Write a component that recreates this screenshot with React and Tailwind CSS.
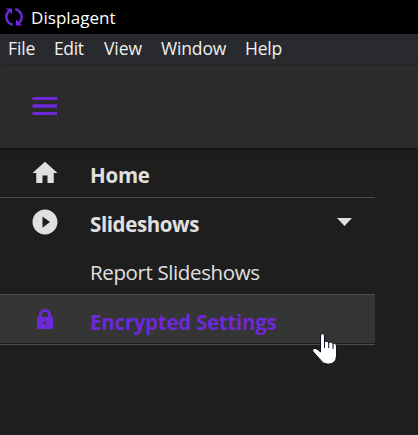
const font = "font-['Open_Sans','Noto_Sans',sans-serif]";

function SyncLogo() {
  return (
    <svg className="block h-5 w-5" viewBox="0 0 20 20" fill="none" stroke="#6d28d9" strokeWidth="2.4">
      <path d="M8.800 17.700A7.900 7.900 0 0 1 5 4" />
      <path d="M11.200 2.300A7.900 7.900 0 0 1 15 16" />
      <path d="M1.800 1.500H8V7.500Z" fill="#6d28d9" stroke="none" />
      <path d="M18.200 18.500H12V12.500Z" fill="#6d28d9" stroke="none" />
    </svg>
  );
}

function MaterialIcon({ d, className }) {
  return (
    <svg className={`block shrink-0 ${className}`} viewBox="0 0 24 24" fill="currentColor">
      <path d={d} />
    </svg>
  );
}

const icons = {
  home: "M10 20v-6h4v6h5v-8h3L12 3 2 12h3v8z",
  play: "M12 2C6.480 2 2 6.480 2 12s4.480 10 10 10 10-4.480 10-10S17.520 2 12 2zm-2 14.500v-9l6 4.500-6 4.500z",
};

export default function App() {
  return (
    <div className={`relative h-[435px] w-[418px] overflow-hidden bg-[#1e1e1e] text-[#e0e0e0] ${font}`}>
      <div className="flex h-[34px] items-center bg-black pl-1 text-white">
        <SyncLogo />
        <span className="mt-px ml-[7px] text-[17px] leading-6 tracking-[0.05px]">Displagent</span>
      </div>
      <div className="flex h-[32px] items-start bg-[#292a2d] pt-[2px] pl-2 text-[17.5px] leading-6 text-[#f0f0f0]">
        <span className="w-[46px] tracking-[-0.1px]">File</span>
        <span className="w-[50px] tracking-[-0.4px]">Edit</span>
        <span className="w-[57px] tracking-[-0.1px]">View</span>
        <span className="w-[84px] tracking-[-0.15px]">Window</span>
        <span className="tracking-[-0.2px]">Help</span>
      </div>
      <header className="relative flex h-[82px] items-start bg-[#2b2b2b] pt-[31px] pl-8 text-[#6d28d9] shadow-[0_1px_4px_rgba(0,0,0,0.5)]">
        <svg className="block h-[18px] w-[25px]" viewBox="0 0 25 18" fill="currentColor">
          <path d="M0.500 0H25V3H0.500ZM0.500 7.200H25V10.700H0.500ZM0.500 15H25V18H0.500Z" />
        </svg>
      </header>
      <nav className="w-[375px] text-[20.5px] leading-7">
        <div className="flex h-[50px] items-center border-b border-[#4c4c4c] pl-[30px] font-bold">
          <MaterialIcon d={icons.home} className="mt-px h-[30px] w-[30px]" />
          <span className="mt-[5px] ml-[30px] tracking-[-0.25px]">Home</span>
        </div>
        <div className="flex h-12 items-center pl-[30px] font-bold">
          <MaterialIcon d={icons.play} className="h-[30px] w-[30px]" />
          <span className="mt-[4px] ml-[30px] tracking-[-0.4px]">Slideshows</span>
          <svg className="mr-[23px] mb-px ml-auto block h-2 w-[15px]" viewBox="0 0 15 8" fill="currentColor">
            <path d="M0 0H15L7.500 8Z" />
          </svg>
        </div>
        <div className="flex h-12 items-center pl-[90px]">
          <span className="mt-1 tracking-[-0.38px]">Report Slideshows</span>
        </div>
        <div className="border-b border-[#4c4c4c] pb-px">
          <div className="flex h-[49px] items-center border-t border-[#4c4c4c] bg-[#353535] pl-[37px] font-bold text-[#6d28d9]">
            <svg className="mb-px block h-5 w-4" viewBox="0 0 16 20" fill="currentColor">
              <path
                fillRule="evenodd"
                d="M1.800 8V6.200A6.200 6.200 0 0 1 14.200 6.200V8H15Q16 8 16 9V19Q16 20 15 20H1Q0 20 0 19V9Q0 8 1 8ZM4.800 8H11.200V6.200A3.200 3.200 0 0 0 4.800 6.200ZM8 12.600A1.300 1.300 0 1 0 8 15.200A1.300 1.300 0 1 0 8 12.600Z"
              />
            </svg>
            <span className="mt-[5px] ml-[37px] tracking-[-0.28px]">Encrypted Settings</span>
          </div>
        </div>
      </nav>
      <svg className="absolute top-[332px] left-[311px] h-[34px] w-[28px]" viewBox="0 0 28 34" fill="white" stroke="#111122" strokeWidth="1">
        <path d="M9.500 20V4Q9.500 1.500 11.500 1.500T13.500 4V10Q14.500 9 16 9.300T17.700 11Q19 9.500 20.400 10.200T22 12Q23.500 10.700 25 12Q25.500 13 25.500 15V24Q25 32 17 32.200Q12 32 9.500 28L2 19.500Q1 17 3 16.500Q5 16 7 17.800Z" />
        <path d="M13.500 10V16M17.700 11V16M22 12V17" fill="none" />
      </svg>
    </div>
  );
}
